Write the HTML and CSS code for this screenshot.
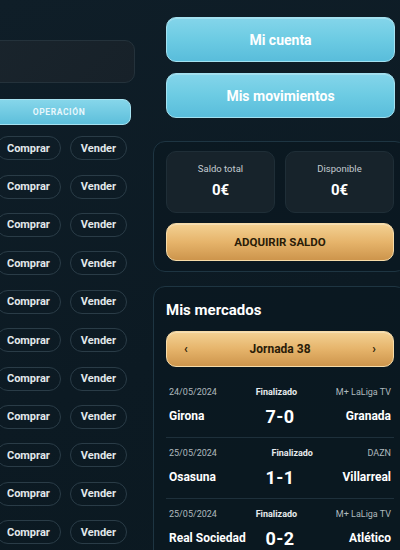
FILE: index.html
```html
<!DOCTYPE html>
<html lang="es">
<head>
    <meta charset="utf-8">
    <link rel="stylesheet" href="styles.css">
</head>
<body>
    <div class="pagina">
        <section class="col-mercado">
            <div class="filtro"></div>
            <div class="tabla">
                <div class="tabla-cabecera">
                    <span></span>
                    <span class="col-op">OPERACIÓN</span>
                </div>
                <div class="fila"><span></span><div class="col-op"><button class="pill">Comprar</button><button class="pill">Vender</button></div></div>
                <div class="fila"><span></span><div class="col-op"><button class="pill">Comprar</button><button class="pill">Vender</button></div></div>
                <div class="fila"><span></span><div class="col-op"><button class="pill">Comprar</button><button class="pill">Vender</button></div></div>
                <div class="fila"><span></span><div class="col-op"><button class="pill">Comprar</button><button class="pill">Vender</button></div></div>
                <div class="fila"><span></span><div class="col-op"><button class="pill">Comprar</button><button class="pill">Vender</button></div></div>
                <div class="fila"><span></span><div class="col-op"><button class="pill">Comprar</button><button class="pill">Vender</button></div></div>
                <div class="fila"><span></span><div class="col-op"><button class="pill">Comprar</button><button class="pill">Vender</button></div></div>
                <div class="fila"><span></span><div class="col-op"><button class="pill">Comprar</button><button class="pill">Vender</button></div></div>
                <div class="fila"><span></span><div class="col-op"><button class="pill">Comprar</button><button class="pill">Vender</button></div></div>
                <div class="fila"><span></span><div class="col-op"><button class="pill">Comprar</button><button class="pill">Vender</button></div></div>
                <div class="fila"><span></span><div class="col-op"><button class="pill">Comprar</button><button class="pill">Vender</button></div></div>
            </div>
        </section>

        <aside class="col-cuenta">
            <div class="acciones">
                <button class="btn-azul">Mi cuenta</button>
                <button class="btn-azul">Mis movimientos</button>
            </div>

            <div class="tarjeta saldo">
                <div class="saldo-cajas">
                    <div class="caja">
                        <span class="caja-titulo">Saldo total</span>
                        <span class="caja-valor">0€</span>
                    </div>
                    <div class="caja">
                        <span class="caja-titulo">Disponible</span>
                        <span class="caja-valor">0€</span>
                    </div>
                </div>
                <button class="btn-oro btn-adquirir">ADQUIRIR SALDO</button>
            </div>

            <div class="tarjeta mercados">
                <h2>Mis mercados</h2>
                <div class="btn-oro jornada">
                    <span class="flecha">‹</span>
                    <span>Jornada 38</span>
                    <span class="flecha">›</span>
                </div>
                <div class="partidos">
                    <div class="partido">
                        <div class="partido-info">
                            <span class="fecha">24/05/2024</span>
                            <span class="estado">Finalizado</span>
                            <span class="canal">M+ LaLiga TV</span>
                        </div>
                        <div class="partido-equipos">
                            <span class="local">Girona</span>
                            <span class="marcador">7-0</span>
                            <span class="visitante">Granada</span>
                        </div>
                    </div>
                    <div class="partido">
                        <div class="partido-info">
                            <span class="fecha">25/05/2024</span>
                            <span class="estado">Finalizado</span>
                            <span class="canal">DAZN</span>
                        </div>
                        <div class="partido-equipos">
                            <span class="local">Osasuna</span>
                            <span class="marcador">1-1</span>
                            <span class="visitante">Villarreal</span>
                        </div>
                    </div>
                    <div class="partido">
                        <div class="partido-info">
                            <span class="fecha">25/05/2024</span>
                            <span class="estado">Finalizado</span>
                            <span class="canal">M+ LaLiga TV</span>
                        </div>
                        <div class="partido-equipos">
                            <span class="local">Real Sociedad</span>
                            <span class="marcador">0-2</span>
                            <span class="visitante">Atlético</span>
                        </div>
                    </div>
                </div>
            </div>
        </aside>
    </div>
</body>
</html>
```

FILE: styles.css
```css
html, body{
    margin: 0;
    height: 100%;
}
body{
    background: linear-gradient(160deg, #0f1e28 0%, #0c1a23 60%, #0b1921 100%);
    font-family: Roboto, "Liberation Sans", sans-serif;
    color: #ffffff;
    overflow: hidden;
}
button{
    font-family: inherit;
    cursor: pointer;
}

/* la pagina sigue a la izquierda, fuera de la vista */
.pagina{
    display: flex;
    gap: 18px;
    margin-left: -140px;
}

/* ---- columna del mercado ---- */
.col-mercado{
    width: 275px;
    flex-shrink: 0;
    padding-top: 40px;
}
.filtro{
    height: 43px;
    box-sizing: border-box;
    border-radius: 10px;
    background: linear-gradient(135deg, #1b262e, #172129);
    border: 1px solid #24323b;
}
.tabla{
    margin: 16px 4px 0 0;
}
.tabla-cabecera{
    display: grid;
    grid-template-columns: 1fr 142px;
    align-items: center;
    height: 26px;
    border-radius: 8px;
    background: linear-gradient(180deg, #86d6ea, #5dbfdb);
    border: 1px solid #a6e2f1;
    box-sizing: border-box;
    margin-bottom: 4px;
}
.tabla-cabecera .col-op{
    text-align: center;
    font-size: 8.5px;
    font-weight: 700;
    letter-spacing: 0.6px;
    color: #e8f7fc;
}
.fila{
    display: grid;
    grid-template-columns: 1fr 142px;
    height: 38.4px;
    align-items: center;
}
.fila .col-op{
    display: flex;
    justify-content: center;
    gap: 9px;
    padding-left: 3px;
}
.pill{
    height: 24px;
    padding: 0 10px;
    border-radius: 12px;
    border: 1px solid #2a3c47;
    background: transparent;
    color: #e2e8eb;
    font-size: 11px;
    font-weight: 700;
}

/* ---- columna de la cuenta ---- */
.col-cuenta{
    width: 254px;
    flex-shrink: 0;
}
.acciones{
    display: flex;
    flex-direction: column;
    gap: 11px;
    padding: 17px 12px 0 13px;
}
.btn-azul{
    height: 45px;
    border-radius: 10px;
    border: 1px solid #a3e1f0;
    background: linear-gradient(180deg, #84d5ea 0%, #6ccbe3 50%, #59bddb 100%);
    box-shadow: inset 0 1px 0 rgba(255, 255, 255, 0.25);
    color: #ffffff;
    font-size: 14px;
    font-weight: 700;
}
.btn-oro{
    border-radius: 10px;
    border: 1px solid #f6dba8;
    background: linear-gradient(180deg, #f3d193 0%, #e6b46b 50%, #cd954c 100%);
    box-shadow: inset 0 1px 0 rgba(255, 255, 255, 0.3);
    color: #2a1c08;
    font-weight: 700;
}
.tarjeta{
    border: 1px solid #1e3542;
    border-radius: 12px;
    background: rgba(10, 24, 32, 0.6);
    padding: 9px 12px;
}
.saldo{
    margin-top: 23px;
    padding-bottom: 10px;
}
.saldo-cajas{
    display: grid;
    grid-template-columns: 1fr 1fr;
    gap: 10px;
}
.caja{
    height: 62px;
    box-sizing: border-box;
    padding-top: 10px;
    border-radius: 10px;
    background: #17232b;
    border: 1px solid #1f2e37;
    display: flex;
    flex-direction: column;
    align-items: center;
}
.caja-titulo{
    font-size: 9.5px;
    line-height: 14px;
    color: #c3cbd0;
}
.caja-valor{
    margin-top: 3px;
    font-size: 15px;
    line-height: 22px;
    font-weight: 700;
}
.btn-adquirir{
    display: block;
    width: 100%;
    height: 38px;
    margin-top: 10px;
    font-size: 11.5px;
}

.mercados{
    margin-top: 14px;
    padding-top: 13px;
}
.mercados h2{
    margin: 0;
    font-size: 15px;
    line-height: 20px;
    font-weight: 700;
}
.jornada{
    height: 36px;
    box-sizing: border-box;
    margin-top: 11px;
    padding: 0 17px;
    display: flex;
    align-items: center;
    justify-content: space-between;
    font-size: 12px;
}
.jornada .flecha{
    font-size: 12px;
}
.partidos{
    margin-top: 10px;
}
.partido{
    padding: 9px 3px 10px;
    border-bottom: 1px solid #1e303b;
}
.partido-info{
    display: flex;
    justify-content: space-between;
    font-size: 9px;
    line-height: 13px;
    color: #aeb8be;
}
.partido-info .estado{
    color: #e6ebee;
    font-weight: 700;
}
.partido-equipos{
    display: grid;
    grid-template-columns: 1fr auto 1fr;
    align-items: center;
    margin-top: 6px;
    height: 22px;
    font-size: 12px;
    font-weight: 700;
}
.visitante{
    text-align: right;
}
.marcador{
    font-size: 18px;
    letter-spacing: 0.5px;
}
```
